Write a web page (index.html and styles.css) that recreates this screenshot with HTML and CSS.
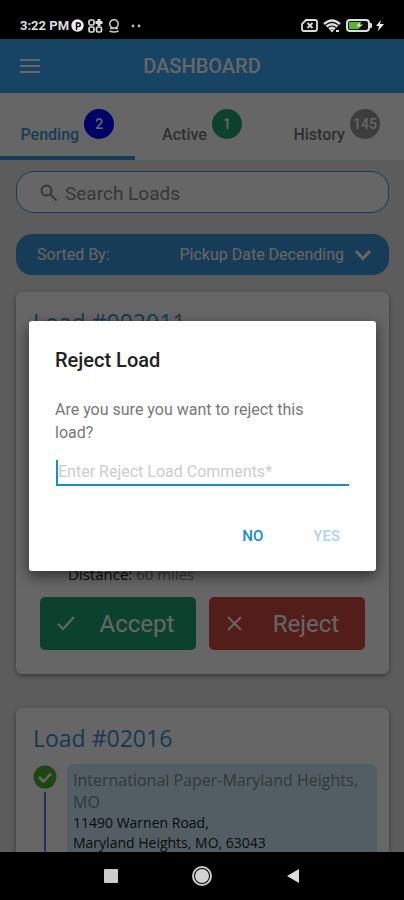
FILE: index.html
```html
<!DOCTYPE html>
<html lang="en">
<head>
<meta charset="utf-8">
<meta name="viewport" content="width=device-width, initial-scale=1">
<title>Dashboard</title>
<link rel="stylesheet" href="styles.css">
</head>
<body>
<div class="phone">
  <div class="status">
    <span class="time">3:22 PM</span>
    <svg width="13" height="13" viewBox="0 0 13 13"><circle cx="6.500" cy="6.500" r="6.200" fill="#eee"/><path d="M5.500 11V4h2a1.800 1.800 0 0 1 0 3.600H5.500" fill="none" stroke="#000" stroke-width="1.400"/></svg>
    <svg class="s-apps" width="15" height="14" viewBox="0 0 15 14" fill="none" stroke="#ddd" stroke-width="1.700"><rect x="1" y="1" width="5" height="5" rx="1.500"/><rect x="1" y="8" width="5" height="5" rx="1.500"/><rect x="8.500" y="8" width="5" height="5" rx="1.500"/><path d="M11 0v7M7.500 3.500h7" stroke-width="3"/></svg>
    <svg class="s-loc" width="12" height="14" viewBox="0 0 12 14" fill="none" stroke="#ccc" stroke-width="1.500"><path d="M4.200 8.700a4.200 4.200 0 1 1 3.600 0M2 9.500h3V8M10 9.500H7V8M1.500 12q4.500 2 9 0"/></svg>
    <svg class="s-dots" width="10" height="4" viewBox="0 0 10 4" fill="#bbb"><circle cx="2" cy="2" r="1.400"/><circle cx="8" cy="2" r="1.400"/></svg>
    <span class="grow"></span>
    <svg width="17" height="13" viewBox="0 0 17 13" fill="none" stroke="#ddd" stroke-width="1.800"><path d="M5 1h9q2 0 2 2v7q0 2-2 2H3q-2 0-2-2V5z"/><path d="M6.500 4l5 5M11.500 4l-5 5"/></svg>
    <svg class="s-wifi" width="18" height="14" viewBox="0 0 18 14" fill="none" stroke="#ddd" stroke-width="2.400"><path d="M1 5q8-7 16 0M3.500 7.500q5.500-4.500 11 0M6 10q3-2.500 6 0"/><path d="M6.500 10.500h5L9 13.500z" fill="#ddd" stroke="none"/><path d="M13 12h3" stroke-width="2"/></svg>
    <svg class="s-batt" width="26" height="13" viewBox="0 0 26 13"><rect x="1" y="1" width="22" height="11" rx="3" fill="#111" stroke="#ddd" stroke-width="2"/><path d="M3 3h11l-2 7H3z" fill="#59b52c"/><path d="M15 2.500l-5 4.500h3l-2 3.500 6-5h-3z" fill="#cfe8c4"/><path d="M24 4h1q1 0 1 1v3q0 1-1 1h-1z" fill="#ddd"/></svg>
    <svg width="8" height="13" viewBox="0 0 8 13"><path d="M5 1L0 7h3L2 12l6-7H4z" fill="#eee"/></svg>
  </div>

  <div class="screen">
    <header class="bar">
      <button class="menu" aria-label="Menu"><svg width="20" height="16" viewBox="0 0 20 16" stroke="#fff" stroke-width="2"><path d="M0 2h20M0 8h20M0 14h20"/></svg></button>
      <h1>DASHBOARD</h1>
    </header>
    <nav class="tabs">
      <a class="tab current" href="#pending">Pending<span class="count blue">2</span></a>
      <a class="tab" href="#active">Active<span class="count green">1</span></a>
      <a class="tab" href="#history">History<span class="count gray">145</span></a>
    </nav>
    <main class="content">
      <label class="search">
        <svg width="18" height="18" viewBox="0 0 18 18" fill="none" stroke="#8a8a8a" stroke-width="2"><circle cx="6.500" cy="6.500" r="5"/><path d="M10.500 10.500l6 6"/></svg>
        <input type="search" placeholder="Search Loads" aria-label="Search Loads">
      </label>
      <button class="sort"><span>Sorted By:</span><span class="sort-value">Pickup Date Decending</span>
        <svg width="18" height="12" viewBox="0 0 18 12" fill="none" stroke="#fff" stroke-width="3"><path d="M2 2l7 7.500L16 2"/></svg>
      </button>
      <article class="card first">
        <h2>Load #002011</h2>
        <p class="distance">Distance: <span>60 miles</span></p>
        <div class="actions">
          <button class="accept"><svg width="18" height="15" viewBox="0 0 18 15" fill="none" stroke="#fff" stroke-width="2"><path d="M1 8l5 5L17 1"/></svg><span>Accept</span></button>
          <button class="reject"><svg width="18" height="15" viewBox="0 0 18 15" fill="none" stroke="#fff" stroke-width="2"><path d="M2 1l13 13M15 1L2 14"/></svg><span>Reject</span></button>
        </div>
      </article>
      <article class="card">
        <h2>Load #02016</h2>
        <div class="stop">
          <div class="track"><svg width="24" height="24" viewBox="0 0 24 24"><circle cx="12" cy="12" r="11.500" fill="#4caf2f"/><path d="M6 12l4.500 4.500L18 8.500" fill="none" stroke="#fff" stroke-width="2.500"/></svg></div>
          <div class="place"><p class="name">International Paper-Maryland Heights, MO</p><p>11490 Warnen Road,</p><p>Maryland Heights, MO, 63043</p></div>
        </div>
      </article>
    </main>
    <div class="scrim">
      <form class="dialog" role="dialog" aria-labelledby="dialog-title">
        <h2 id="dialog-title">Reject Load</h2>
        <p>Are you sure you want to reject this load?</p>
        <div class="field"><input type="text" placeholder="Enter Reject Load Comments*" aria-label="Enter Reject Load Comments"></div>
        <div class="choices"><button type="button">NO</button><button type="button" disabled>YES</button></div>
      </form>
    </div>
  </div>

  <div class="system">
    <button aria-label="Recent apps"><svg width="14" height="14" viewBox="0 0 14 14"><rect width="14" height="14" rx="1" fill="#ccc"/></svg></button>
    <button aria-label="Home"><svg width="20" height="20" viewBox="0 0 20 20"><circle cx="10" cy="10" r="9" fill="none" stroke="#ccc" stroke-width="2"/><circle cx="10" cy="10" r="7" fill="#d2d2d2"/></svg></button>
    <button aria-label="Back"><svg width="14" height="16" viewBox="0 0 14 16"><path d="M13 1v14L1 8z" fill="#ddd"/></svg></button>
  </div>
</div>
</body>
</html>
```
FILE: styles.css
```css
* { box-sizing: border-box; }
body, h1, h2, p { margin: 0; font-weight: 400; }
body { font-family: Roboto, sans-serif; background: #000; }
button { border: 0; padding: 0; background: none; font: inherit; color: inherit; }
input { border: 0; padding: 0; background: none; font: inherit; outline: 0; min-width: 0; }
a { color: inherit; text-decoration: none; }
svg { display: block; flex: none; }

.phone { height: 100vh; display: flex; flex-direction: column; }

.status { height: 39px; flex: none; display: flex; align-items: center; padding: 12px 20px 0; color: #ddd; }
.time { font-size: 13px; font-weight: 700; margin-right: 2px; }
.s-apps { margin-left: 4px; }
.s-loc { margin-left: 5px; }
.s-dots { margin-left: 11px; }
.grow { flex: 1; }
.s-wifi { margin: 0 5px; }
.s-batt { margin-right: 4px; }

.screen { position: relative; flex: 1; min-height: 0; overflow: hidden; background: #e6e6e6; }

.bar { height: 54px; display: grid; grid-template-columns: 1fr auto 1fr; align-items: center; padding: 0 20px; background: #3ba9fb; color: #fff; }
.menu { justify-self: start; }
.bar h1 { font-size: 20px; font-weight: 500; }

.tabs { height: 67px; display: grid; grid-template-columns: repeat(3, 1fr); background: #fff; color: #777; font-size: 16px; font-weight: 500; }
.tab { display: flex; justify-content: center; align-items: flex-end; gap: 5px; padding-bottom: 11px; border-bottom: 4px solid transparent; line-height: 20px; }
.current { color: #3b97d9; border-color: #3b97d9; }
.count { width: 30px; height: 30px; margin-bottom: 6px; border-radius: 50%; display: grid; place-items: center; color: #fff; font-size: 14px; }
.blue { background: #00f; }
.green { background: #1ea672; }
.gray { background: #999; }

.content { padding: 11px 15px 0 16px; }
.search { height: 42px; display: flex; align-items: center; gap: 7px; padding: 2px 23px 0; border: 1px solid #3b97d9; border-radius: 18px; background: #fff; }
.search input { flex: 1; font-size: 19px; }
.search input::placeholder { color: #8a8a8a; opacity: 1; }
.sort { width: 100%; height: 41px; margin: 21px 0 17px; display: flex; align-items: center; padding: 0 17px 0 21px; border-radius: 16px; background: #3b97d9; color: #fff; font-size: 16px; }
.sort-value { margin-left: auto; margin-right: 10px; }

.card { margin-bottom: 34px; padding: 14px 12px 0 17px; border-radius: 6px; background: #fff; box-shadow: 0 2px 5px #0006; font-family: "Open Sans", sans-serif; }
.card h2 { color: #3b8fd4; font-size: 23px; line-height: 32px; }
.first { height: 382px; display: flex; flex-direction: column; padding: 14px 24px 24px; }
.first h2 { margin-left: -7px; }
.distance { margin: auto 0 13px 28px; font-size: 15px; line-height: 20px; color: #222; }
.distance span { color: #888; }
.actions { display: grid; grid-template-columns: 1fr 1fr; gap: 13px; }
.actions button { height: 53px; display: flex; align-items: center; border-radius: 5px; padding: 0 17px; font-family: Roboto, sans-serif; font-size: 24px; color: #fff; }
.actions span { flex: 1; text-align: center; padding-left: 20px; }
.accept { background: #1ea672; }
.reject { background: #d04a40; }

.stop { display: flex; margin-top: 10px; }
.track { width: 24px; margin-right: 10px; display: flex; flex-direction: column; align-items: center; padding-top: 1px; }
.track::after { content: ""; width: 2px; flex: 1; margin-top: 3px; background: #3b8fd4; }
.place { flex: 1; padding: 5px 6px 20px; border-radius: 6px; background: #cdeaf7; color: #222; font-size: 14px; line-height: 20px; }
.name { color: #888; font-size: 16px; line-height: 22px; }

.scrim { position: absolute; inset: 0; display: flex; align-items: center; background: #0009; padding: 0 28px 0 29px; }
.dialog { flex: 1; padding: 25px 26px 15px; border-radius: 3px; background: #fff; box-shadow: 0 5px 14px #0008; }
.dialog h2 { font-size: 20px; font-weight: 500; line-height: 28px; color: #222; }
.dialog p { margin: 24px 0 16px; padding-right: 16px; font-size: 16px; line-height: 23px; color: #777; }
.field { margin: 0 1px; border-bottom: 2px solid #188bd0; }
.field input { display: block; width: 100%; height: 24px; border-left: 2px solid #188bd0; font-size: 16px; }
.field input::placeholder { color: #ccc; opacity: 1; }
.choices { display: flex; justify-content: flex-end; gap: 50px; margin: 30px 10px 0; }
.choices button { height: 40px; color: #188bd0; font-size: 15px; font-weight: 500; }
.choices button:disabled { color: #a9d5f0; }

.system { height: 48px; flex: none; display: flex; justify-content: center; align-items: center; gap: 74px; background: #000; }
```
